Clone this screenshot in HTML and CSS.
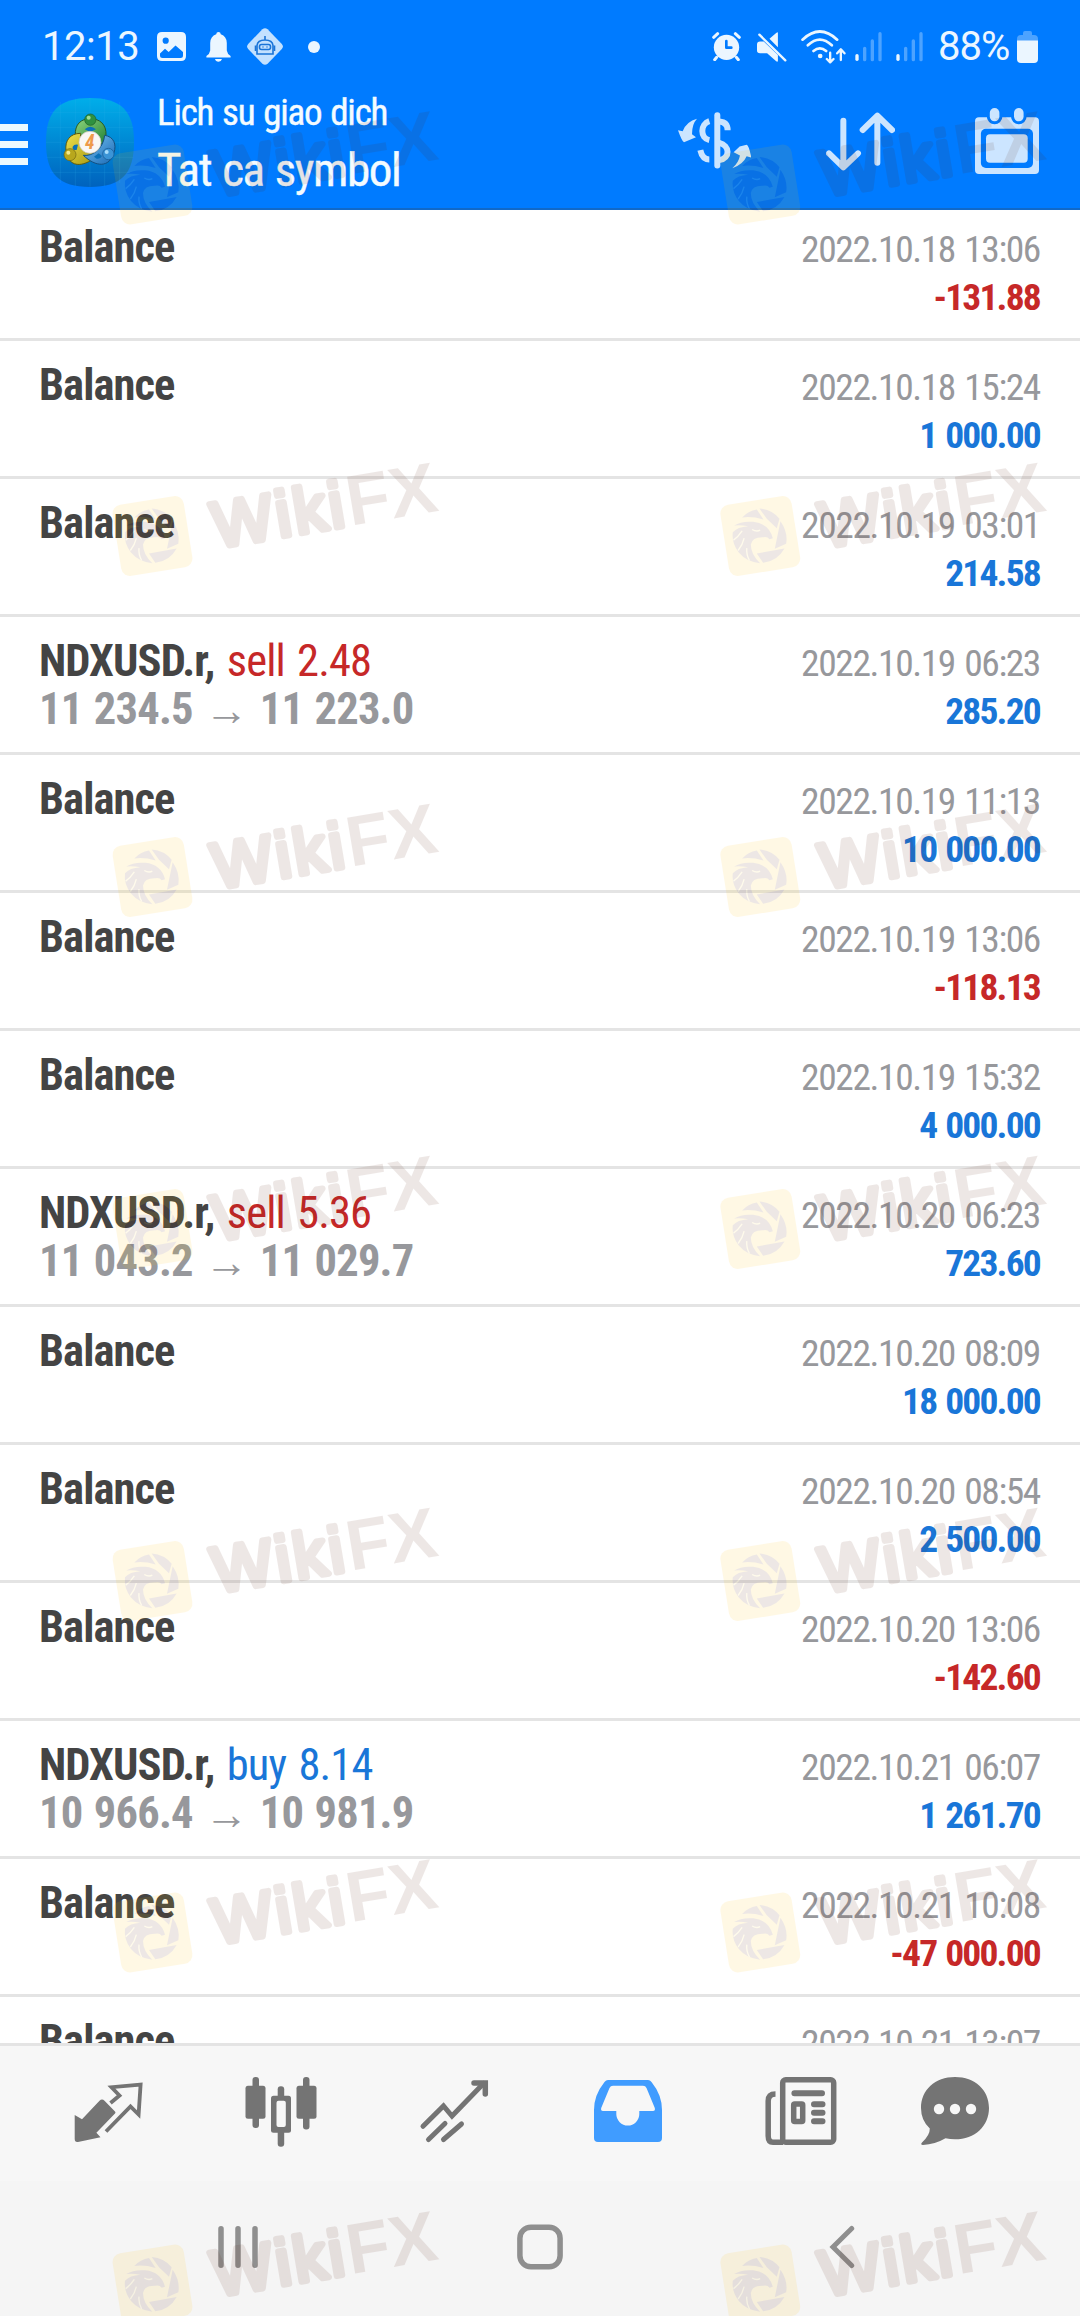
FILE: index.html
```
<!DOCTYPE html>
<html lang="vi">
<head>
  <meta charset="UTF-8">
  <meta name="viewport" content="width=device-width, initial-scale=1.0">
  <title>Lich su giao dich</title>
  <link rel="stylesheet" href="styles.css">
</head>
<body>
  <div class="screen">
    <header class="header">
      <div class="status-bar">
        <div class="status-left">
          <span class="clock">12:13</span>
          <svg class="ic-photo" width="29" height="29" viewBox="0 0 29 29">
            <path fill="#ebf6ff" fill-rule="evenodd" d="M5 0H24Q29 0 29 5V24Q29 29 24 29H5Q0 29 0 24V5Q0 0 5 0ZM8.7 5.6A3.1 3.1 0 1 0 8.7 11.8A3.1 3.1 0 1 0 8.7 5.6ZM3 21.5L8 16.7L11.7 20L18.5 13.6L26 20V23.5Q26 26 23.5 26H5.5Q3 26 3 23.5Z"/>
          </svg>
          <svg class="ic-bell" width="25" height="30" viewBox="0 0 25 30">
            <path fill="#ebf6ff" d="M12.5 0Q14.6 0 14.8 2.3Q20.6 4.2 20.8 11V18.5Q21.2 21.8 24.6 24V25.5H.4V24Q3.8 21.8 4.2 18.5V11Q4.4 4.2 10.2 2.3Q10.4 0 12.5 0ZM9 27H16Q15.2 29.8 12.5 29.8Q9.8 29.8 9 27Z"/>
          </svg>
          <svg class="ic-bot" width="36" height="37" viewBox="0 0 36 37">
            <path fill="#c3e1ff" d="M15.4 1.2Q18 -.8 20.6 1.2L34.8 16Q37 18.5 34.8 21L20.6 35.8Q18 37.8 15.4 35.8L1.2 21Q-1 18.5 1.2 16Z"/>
            <g fill="none" stroke="#1a74d8" stroke-width="1.6">
              <path d="M18 8V12M10 26V17.500Q10.500 12 18 12Q25.500 12 26 17.500V26Z"/>
              <rect x="12.500" y="16.500" width="11" height="5" rx="2"/>
              <path d="M8.500 17.500V23M27.500 17.500V23M15.500 19H16.500M19.500 19H20.500"/>
            </g>
          </svg>
          <span class="dot"></span>
        </div>
        <div class="status-right">
          <svg class="ic-alarm" width="29" height="29" viewBox="0 0 87 87">
            <path d="M5 16L17 5M82 16L70 5M14 76L8 83M73 76L79 83" stroke="#ebf6ff" stroke-width="9" stroke-linecap="round"/>
            <circle cx="43.500" cy="46" r="38" fill="#ebf6ff"/>
            <path d="M43 27V47H58" fill="none" stroke="#007bff" stroke-width="8" stroke-linecap="round" stroke-linejoin="round"/>
          </svg>
          <svg class="ic-mute" width="30" height="30" viewBox="0 0 89 89">
            <path fill="#ebf6ff" d="M62 2V45L37 20L56 4Q62 -1 62 2ZM0 37Q0 28 9 28H20L62 68V87Q60 89 57 87L30 63H9Q0 63 0 55Z"/>
            <path d="M7 8L84 84" stroke="#ebf6ff" stroke-width="7" stroke-linecap="round"/>
          </svg>
          <svg class="ic-wifi" width="45" height="34" viewBox="0 0 134 102">
            <g fill="none" stroke="#ebf6ff" stroke-width="8" stroke-linecap="round" stroke-linejoin="round">
              <path d="M4 29Q56 -20 108 29M20 46Q56 12 92 46M37 63Q56 47 75 63"/>
              <path stroke-width="7" d="M87 68V96M77 87L87 97L97 87M119 90V60M108 70L119 58L130 70"/>
            </g>
            <circle cx="57" cy="78" r="7" fill="#ebf6ff"/>
          </svg>
          <svg class="ic-signal" width="27" height="30" viewBox="0 0 81 90">
            <g stroke-width="10" stroke-linecap="round">
              <path d="M6 71V82" stroke="#ebf6ff"/>
              <path d="M29 49V83M52 27V83M75 5V83" stroke="#4da3ff"/>
            </g>
          </svg>
          <svg class="ic-signal" width="27" height="30" viewBox="0 0 81 90">
            <g stroke-width="10" stroke-linecap="round">
              <path d="M6 71V82" stroke="#ebf6ff"/>
              <path d="M29 49V83M52 27V83M75 5V83" stroke="#4da3ff"/>
            </g>
          </svg>
          <span class="percent">88%</span>
          <svg width="21" height="32" viewBox="0 0 21 32">
            <path fill="#4da3ff" d="M6 2Q6 0 8 0H13Q15 0 15 2V4H17Q21 4 21 8V12H0V8Q0 4 4 4H6Z"/>
            <path fill="#ebf6ff" d="M0 9.500H21V28Q21 32 17 32H4Q0 32 0 28Z"/>
          </svg>
        </div>
      </div>

      <div class="app-bar">
        <div class="burger"><span></span><span></span><span></span></div>
        <svg class="app-icon" width="88" height="89" viewBox="0 0 264 267">
          <defs>
            <linearGradient id="bg" x1="0" y1="0" x2="0" y2="1">
              <stop offset="0" stop-color="#00aeea"/>
              <stop offset="1" stop-color="#0062bd"/>
            </linearGradient>
            <linearGradient id="green" x1="0" y1="0" x2="1" y2="1">
              <stop offset="0" stop-color="#8fd67c"/>
              <stop offset="1" stop-color="#1f7f35"/>
            </linearGradient>
            <linearGradient id="yellow" x1="0" y1="0" x2="1" y2="1">
              <stop offset="0" stop-color="#f0e04c"/>
              <stop offset="1" stop-color="#a89a12"/>
            </linearGradient>
            <linearGradient id="blue" x1="0" y1="0" x2="1" y2="1">
              <stop offset="0" stop-color="#7cc6f4"/>
              <stop offset="1" stop-color="#1768b5"/>
            </linearGradient>
          </defs>
          <path fill="url(#bg)" d="M132 0C225 0 264 38 264 133C264 229 225 267 132 267C39 267 0 229 0 133C0 38 39 0 132 0Z"/>
          <path d="M43 12V255M88 2V265M132 0V267M176 2V265M221 12V255M12 43H252M2 88H262M0 133H264M2 178H262M12 223H252" stroke="#35b5ea" stroke-opacity=".25" stroke-width="2"/>
          <g stroke-width="3">
            <path fill="url(#green)" stroke="#2b5a22" d="M88 112C86 78 106 62 133 62C160 62 182 78 180 112C178 128 170 138 160 142H106C94 136 90 126 88 112Z"/>
            <path fill="url(#yellow)" stroke="#5b5a10" d="M104 106C72 106 56 128 60 158C66 200 96 210 134 188L144 160C116 156 102 134 104 106Z"/>
            <path fill="url(#blue)" stroke="#134f80" d="M176 112C204 116 212 140 204 164C190 210 150 208 112 172C140 176 172 152 176 112Z"/>
            <path fill="#0a70b8" stroke="none" d="M116 94Q133 78 150 94L133 102ZM80 146Q78 158 92 156L96 140Q84 138 80 146ZM152 182Q164 184 168 174L158 166L144 176Z"/>
          </g>
          <circle cx="133" cy="65" r="17" fill="#2f9140" stroke="#1e5e25" stroke-width="2"/>
          <circle cx="128" cy="59" r="6" fill="#9fdd95"/>
          <circle cx="72" cy="170" r="18" fill="#b8a71d" stroke="#6e6310" stroke-width="2"/>
          <circle cx="67" cy="164" r="6" fill="#f3ea8c"/>
          <circle cx="187" cy="168" r="17" fill="#3b94d6" stroke="#17578f" stroke-width="2"/>
          <circle cx="182" cy="162" r="6" fill="#a6dcfb"/>
          <circle cx="132" cy="133" r="33" fill="#faf7f4" stroke="#c9c4bd" stroke-width="2"/>
          <text class="four" x="131" y="153" text-anchor="middle">4</text>
        </svg>
        <div class="titles">
          <div class="subtitle">Lich su giao dich</div>
          <div class="title">Tat ca symbol</div>
        </div>
        <div class="actions">
          <svg class="ic-swap" width="73.300" height="57" viewBox="0 0 220 170">
            <g fill="none" stroke="#cce5ff" stroke-width="18">
              <path stroke-linecap="round" d="M118 9V160"/>
              <path d="M94 27C66 36 66 78 94 84M67 114C71 132 80 142 94 142M124 28Q149 30 149 54M124 92C156 100 158 138 124 144"/>
            </g>
            <path fill="#cce5ff" d="M0 54L14 57Q26 28 57 20Q42 36 42 66L54 75L18 90Q12 88 0 54ZM163 168Q182 152 186 130L167 120L185 103L206 98Q212 98 220 136L206 132Q196 156 163 168Z"/>
          </svg>
          <svg class="ic-sort" width="68.700" height="59" viewBox="0 0 206 177">
            <path fill="none" stroke="#cce5ff" stroke-width="18" stroke-linecap="round" stroke-linejoin="round" d="M52 26V164M9 124L52 166L96 124M154 152V12M110 54L154 11L198 54"/>
          </svg>
          <svg width="64" height="66" viewBox="0 0 64 66">
            <rect y="9.300" width="64" height="56.700" rx="4" fill="#cce5ff"/>
            <rect x="5.900" y="20.700" width="52.100" height="39.300" rx="5" fill="#007bff"/>
            <rect x="11" y="26.300" width="41.700" height="28.400" rx="4" fill="#cce5ff"/>
            <g fill="#cce5ff" stroke="#007bff" stroke-width="6" paint-order="stroke">
              <rect x="14.800" y="0" width="9.600" height="13.300" rx="4.800"/>
              <rect x="39" y="0" width="9.600" height="13.300" rx="4.800"/>
            </g>
          </svg>
        </div>
      </div>
    </header>

    <main class="history">
      <div class="row">
        <div class="deal"><div class="name">Balance</div></div>
        <div class="result"><div class="date">2022.10.18 13:06</div><div class="amount loss">-131.88</div></div>
      </div>
      <div class="row">
        <div class="deal"><div class="name">Balance</div></div>
        <div class="result"><div class="date">2022.10.18 15:24</div><div class="amount">1 000.00</div></div>
      </div>
      <div class="row">
        <div class="deal"><div class="name">Balance</div></div>
        <div class="result"><div class="date">2022.10.19 03:01</div><div class="amount">214.58</div></div>
      </div>
      <div class="row">
        <div class="deal">
          <div class="name">NDXUSD.r, <span class="sell">sell 2.48</span></div>
          <div class="prices"><span>11 234.5</span><span class="arrow">→</span><span>11 223.0</span></div>
        </div>
        <div class="result"><div class="date">2022.10.19 06:23</div><div class="amount">285.20</div></div>
      </div>
      <div class="row">
        <div class="deal"><div class="name">Balance</div></div>
        <div class="result"><div class="date">2022.10.19 11:13</div><div class="amount">10 000.00</div></div>
      </div>
      <div class="row">
        <div class="deal"><div class="name">Balance</div></div>
        <div class="result"><div class="date">2022.10.19 13:06</div><div class="amount loss">-118.13</div></div>
      </div>
      <div class="row">
        <div class="deal"><div class="name">Balance</div></div>
        <div class="result"><div class="date">2022.10.19 15:32</div><div class="amount">4 000.00</div></div>
      </div>
      <div class="row">
        <div class="deal">
          <div class="name">NDXUSD.r, <span class="sell">sell 5.36</span></div>
          <div class="prices"><span>11 043.2</span><span class="arrow">→</span><span>11 029.7</span></div>
        </div>
        <div class="result"><div class="date">2022.10.20 06:23</div><div class="amount">723.60</div></div>
      </div>
      <div class="row">
        <div class="deal"><div class="name">Balance</div></div>
        <div class="result"><div class="date">2022.10.20 08:09</div><div class="amount">18 000.00</div></div>
      </div>
      <div class="row">
        <div class="deal"><div class="name">Balance</div></div>
        <div class="result"><div class="date">2022.10.20 08:54</div><div class="amount">2 500.00</div></div>
      </div>
      <div class="row">
        <div class="deal"><div class="name">Balance</div></div>
        <div class="result"><div class="date">2022.10.20 13:06</div><div class="amount loss">-142.60</div></div>
      </div>
      <div class="row">
        <div class="deal">
          <div class="name">NDXUSD.r, <span class="buy">buy 8.14</span></div>
          <div class="prices"><span>10 966.4</span><span class="arrow">→</span><span>10 981.9</span></div>
        </div>
        <div class="result"><div class="date">2022.10.21 06:07</div><div class="amount">1 261.70</div></div>
      </div>
      <div class="row">
        <div class="deal"><div class="name">Balance</div></div>
        <div class="result"><div class="date">2022.10.21 10:08</div><div class="amount loss">-47 000.00</div></div>
      </div>
      <div class="row">
        <div class="deal"><div class="name">Balance</div></div>
        <div class="result"><div class="date">2022.10.21 13:07</div></div>
      </div>
    </main>

    <nav class="tabs">
      <svg width="80" height="80" viewBox="0 0 80 80">
        <path fill="#747474" d="M6.700 43L14 47.300L31.500 28.700Q34 26.500 36.500 28.700L47 39.500Q48 40.500 47 41.500L28.400 60.700L32.500 65.300L10 70Q6.700 70.500 6.700 67Z"/>
        <path fill="none" stroke="#747474" stroke-width="3.800" d="M42.500 31L51.500 23.500L43.500 15.200L72.600 12.500L70.600 42.500L62.500 34.500L38 59.500"/>
      </svg>
      <svg width="80" height="80" viewBox="0 0 80 80">
        <g fill="#747474">
          <rect x="4.500" y="13.700" width="20" height="33" rx="2.500"/>
          <rect x="11.500" y="5" width="6.500" height="51" rx="3"/>
          <rect x="55.500" y="13.700" width="20" height="33" rx="2.500"/>
          <rect x="62" y="5" width="6.500" height="52.500" rx="3"/>
          <rect x="30" y="23.700" width="20" height="37" rx="2.500"/>
          <rect x="36.700" y="14.300" width="6.500" height="60.400" rx="3"/>
        </g>
        <rect x="35.500" y="28.700" width="9.300" height="26.300" rx="2" fill="#f7f7f7"/>
      </svg>
      <svg width="80" height="80" viewBox="0 0 80 80">
        <g fill="none" stroke="#747474" stroke-width="5" stroke-linecap="round">
          <path d="M9 54.300L29.500 34L38 44L69.500 11.500M14.500 67.500L31 51.500M29.500 67.500L47.500 52"/>
          <path stroke-width="5.500" d="M60 10.900H71.300V22"/>
        </g>
      </svg>
      <svg width="80" height="80" viewBox="0 0 80 80">
        <path fill="#409cff" fill-rule="evenodd" d="M20 8H60Q62 8 63.500 10Q74 23 74 38V66Q74 70 70 70H10Q6 70 6 66V38Q6 23 16.500 10Q18 8 20 8ZM25 13.700Q22.500 13.700 21.500 16L13.200 36Q12.500 39 15 39H28.300V42A11.500 11.500 0 0 0 51.300 42V39H65Q67.500 39 66.800 36L58.500 16Q57.500 13.700 55 13.700Z"/>
      </svg>
      <svg width="80" height="80" viewBox="0 0 80 80">
        <g fill="none" stroke="#747474" stroke-width="5.500">
          <rect x="21.700" y="7.700" width="51" height="62.500" rx="3"/>
          <path d="M14.500 22Q7.200 22 7.200 29V64Q7.200 70.200 12 70.200H22"/>
          <rect x="32.700" y="32" width="9" height="17.500" rx="1"/>
          <path stroke-width="6" stroke-linecap="round" d="M33.400 21.200H61M53 32.300H61.500M53 40.700H61.500M53 49.200H61.500"/>
        </g>
      </svg>
      <svg width="80" height="80" viewBox="0 0 80 80">
        <path fill="#747474" d="M40 5C60 5 74 18 74 36C74 54 60 67.300 40 67.300Q35 67.300 30.500 66.300Q20 72.500 8 73Q5 72.500 7 70.500Q15 63 14.800 56.500Q6 48.500 6 36C6 18 20 5 40 5Z"/>
        <g fill="#f7f7f7"><circle cx="24" cy="37" r="5.200"/><circle cx="40" cy="37" r="5.200"/><circle cx="56" cy="37" r="5.200"/></g>
      </svg>
    </nav>

    <footer class="android-nav">
      <svg width="40" height="46" viewBox="0 0 40 46">
        <path d="M3 4.700V41.300M20 4.700V41.300M37 4.700V41.300" stroke="#8f8f8f" stroke-width="5.500" stroke-linecap="round"/>
      </svg>
      <svg class="home" width="46" height="46" viewBox="0 0 46 46">
        <rect x="2.900" y="3.200" width="40.200" height="39.600" rx="11" fill="none" stroke="#8f8f8f" stroke-width="5.500"/>
      </svg>
      <svg width="26" height="46" viewBox="0 0 26 46">
        <path d="M22.700 4.500L4 23L22.700 41.500" fill="none" stroke="#8f8f8f" stroke-width="5" stroke-linecap="round"/>
      </svg>
    </footer>

    <!-- WikiFX watermark tiled over the whole screen -->
    <svg class="watermark" width="1080" height="2316" viewBox="0 0 1080 2316">
      <defs>
        <g id="mark">
          <g opacity=".1">
            <rect x="-36" y="-36" width="72" height="72" rx="9" fill="#ffc100" transform="rotate(-9)"/>
            <g transform="scale(.3333) translate(-136.500 -139.500)">
              <path fill="#5a200f" d="M82 84Q100 64 126 60L146 90Q112 80 82 84ZM134 57Q172 60 194 88L186 116L156 88ZM197 95Q220 128 214 163L180 178ZM126 192L209 177Q188 215 145 220Z"/>
              <path fill="#5a200f" d="M58 108Q80 94 115 97Q162 102 174 146L164 149Q158 140 145 143Q112 142 108 165Q108 195 136 221Q95 217 72 189Q50 160 54 128Q68 112 100 110Q78 106 58 108Z"/>
              <path fill="none" stroke="#ffd84a" stroke-width="4" d="M112 120Q125 128 136 122M56 152Q70 142 82 124M70 183Q84 165 88 146M104 213Q94 196 96 176"/>
            </g>
          </g>
          <g class="wiki" opacity=".1" transform="rotate(-9.500)">
            <text class="wiki-round" x="61" y="22" textLength="132">Wiki</text>
            <text class="wiki-fx" x="197" y="22.500">FX</text>
          </g>
        </g>
      </defs>
      <use href="#mark" x="152.500" y="184.500"/><use href="#mark" x="760.300" y="184.500"/>
      <use href="#mark" x="152.500" y="536"/><use href="#mark" x="760.300" y="536"/>
      <use href="#mark" x="152.500" y="877"/><use href="#mark" x="760.300" y="877"/>
      <use href="#mark" x="152.500" y="1229"/><use href="#mark" x="760.300" y="1229"/>
      <use href="#mark" x="152.500" y="1581"/><use href="#mark" x="760.300" y="1581"/>
      <use href="#mark" x="152.500" y="1932.500"/><use href="#mark" x="760.300" y="1932.500"/>
      <use href="#mark" x="152.500" y="2284.500"/><use href="#mark" x="760.300" y="2284.500"/>
    </svg>
  </div>
</body>
</html>
```
FILE: styles.css
```
* {
  box-sizing: border-box;
}
body {
  margin: 0;
  font-family: "Roboto Condensed", Roboto, sans-serif;
  font-stretch: 75%;
  background: #fff;
}
svg {
  display: block;
  flex: none;
}
.screen {
  position: relative;
  display: flex;
  flex-direction: column;
  width: 1080px;
  height: 2316px;
  overflow: hidden;
}

/* header */
.header {
  flex: none;
  height: 210px;
  background: #007bff;
  border-bottom: 2px solid #1169c8;
}
.status-bar {
  display: flex;
  justify-content: space-between;
  height: 92px;
  padding: 0 42px 0 42px;
  font-family: Roboto, sans-serif;
  font-stretch: 100%;
  font-size: 40px;
  color: #ebf6ff;
}
.status-left,
.status-right {
  display: flex;
  align-items: center;
  height: 93px;
}
.clock {
  width: 115px;
  letter-spacing: -0.5px;
}
.ic-photo {
  margin-right: 20px;
}
.ic-bell {
  margin-right: 16px;
}
.ic-bot {
  margin-right: 25px;
}
.dot {
  width: 12px;
  height: 12px;
  border-radius: 50%;
  background: #ebf6ff;
}
.ic-alarm {
  margin-right: 16px;
}
.ic-mute {
  margin-right: 14px;
}
.ic-wifi {
  margin-right: 9px;
}
.ic-signal {
  margin-right: 14px;
}
.percent {
  width: 80px;
  padding-left: 1px;
  letter-spacing: -1px;
}
.app-bar {
  display: flex;
  height: 116px;
  color: #f4fbff;
}
.burger {
  display: flex;
  flex-direction: column;
  gap: 10px;
  width: 28px;
  padding-top: 32px;
}
.burger span {
  height: 7px;
  background: #ebf9ff;
}
.app-icon {
  margin: 6px 23px 0 18px;
}
.four {
  font-size: 58px;
  font-style: italic;
  font-weight: 700;
  font-family: Roboto, sans-serif;
  fill: #ee9a4a;
}
.subtitle {
  margin-top: -1px;
  font-size: 37px;
  line-height: 44px;
  letter-spacing: -1.2px;
  word-spacing: 1.5px;
}
.title {
  margin-top: 7px;
  font-size: 47px;
  line-height: 56px;
  letter-spacing: -1.35px;
  word-spacing: 1.5px;
}
.subtitle,
.title {
  -webkit-text-stroke: 0.4px #f4fbff;
}
.actions {
  display: flex;
  margin: 16px 41px 0 auto;
}
.ic-swap {
  margin: 4px 75px 0 0;
}
.ic-sort {
  margin: 4px 80px 0 0;
}

/* history list */
.history {
  flex: none;
  height: 1833px;
  overflow: hidden;
}
.row {
  display: flex;
  justify-content: space-between;
  height: 138px;
  padding: 20px 40px 0 39px;
  border-bottom: 3px solid #e4e4e4;
}
.row:first-child {
  margin-top: -7px;
}
.name,
.prices {
  font-size: 44.5px;
  font-weight: 700;
  line-height: 48px;
  letter-spacing: -0.9px;
  color: #444;
}
.name {
  word-spacing: 3px;
}
.name span {
  font-weight: 400;
}
.sell {
  color: #c62828;
}
.buy {
  color: #1976d8;
}
.prices {
  display: flex;
  color: #97989c;
  letter-spacing: -0.8px;
  word-spacing: 2px;
}
.arrow {
  width: 67px;
  font-size: 44px;
  line-height: 51px;
  text-align: center;
}
.result {
  padding-top: 2px;
  text-align: right;
  font-size: 37.5px;
  line-height: 48px;
}
.date {
  color: #97989c;
  letter-spacing: -1.4px;
  word-spacing: 2px;
}
.amount {
  font-weight: 700;
  color: #1976d8;
  letter-spacing: -1.8px;
  word-spacing: 2px;
}
.loss {
  color: #c62828;
}

/* bottom tabs */
.tabs {
  display: flex;
  gap: 93.2px;
  height: 138px;
  padding: 26px 0 0 68px;
  background: #f7f7f7;
  border-top: 3px solid #e4e4e4;
}
.tabs svg:last-child {
  margin-left: -19px;
}
.android-nav {
  display: flex;
  flex: 1;
  padding: 43px 225px 0 218px;
  justify-content: space-between;
  background: #f5f5f5;
}
.home {
  margin-right: 7px;
}

/* watermark */
.watermark {
  position: absolute;
  top: 0;
  left: 0;
  pointer-events: none;
}
.wiki {
  fill: #5a200f;
  stroke: #5a200f;
}
.wiki-round {
  font: 400 64px "Liberation Sans", Arial, sans-serif;
  font-stretch: 100%;
  stroke-width: 6px;
  stroke-linejoin: round;
}
.wiki-fx {
  font: 700 71px "Liberation Sans", Arial, sans-serif;
  stroke: none;
}
```
